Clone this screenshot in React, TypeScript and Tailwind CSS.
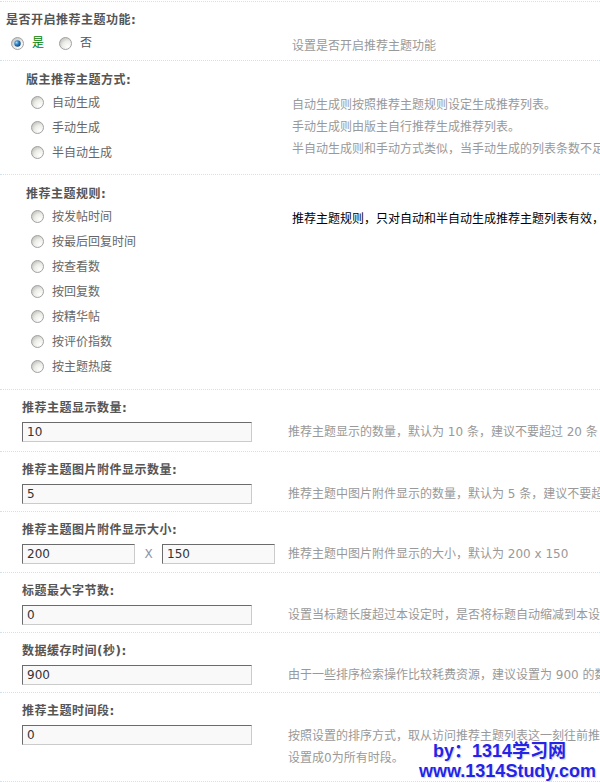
import React from 'react';

function Radio({ on = false }: { on?: boolean }) {
  return (
    <svg width="13" height="13" viewBox="0 0 13 13" className="shrink-0">
      <defs>
        <radialGradient id="rbg" cx="0.7" cy="0.75" r="0.75">
          <stop offset="0" stopColor="#ffffff" />
          <stop offset="0.6" stopColor="#ecece8" />
          <stop offset="1" stopColor="#c9c9c3" />
        </radialGradient>
        <radialGradient id="rdot" cx="0.35" cy="0.35" r="0.75">
          <stop offset="0" stopColor="#9fdcff" />
          <stop offset="0.45" stopColor="#2c80c4" />
          <stop offset="1" stopColor="#0a3a6e" />
        </radialGradient>
      </defs>
      <circle cx="6.5" cy="6.5" r="6" fill="url(#rbg)" stroke="#a2a2a2" strokeWidth="1" />
      {on && <circle cx="6.5" cy="6.5" r="3.2" fill="url(#rdot)" />}
    </svg>
  );
}

function Box({ value, w }: { value: string; w: string }) {
  return (
    <input
      readOnly
      value={value}
      className={`${w} h-[20px] border border-t-[#6b6b6b] border-l-[#6b6b6b] border-r-[#cbcbcb] border-b-[#cbcbcb] bg-[#f9f9f9] px-[4px] text-[12px] text-[#333] outline-none font-['DejaVu_Sans',sans-serif]`}
    />
  );
}

function Option({ text }: { text: string }) {
  return (
    <div className="flex h-[25px] items-center gap-[8px] pl-[31px] text-[#666]">
      <Radio />
      <span>{text}</span>
    </div>
  );
}

function Label({ text, indent }: { text: string; indent: string }) {
  return (
    <div className={`${indent} h-[20px] leading-[20px] font-bold tracking-[0.5px] text-[#555]`}>{text}</div>
  );
}

function Row({
  label,
  desc,
  children,
  pb = 'pb-[7px]',
}: {
  label: string;
  desc: React.ReactNode;
  children: React.ReactNode;
  pb?: string;
}) {
  return (
    <div className={`border-b border-dotted border-[#cde3f3] pt-[8px] ${pb}`}>
      <Label text={label} indent="pl-[22px]" />
      <div className="mt-[4px] flex items-center">
        <div className="flex w-[288px] shrink-0 items-center pl-[22px]">{children}</div>
        <div className="whitespace-nowrap leading-[20px] text-[#999]">{desc}</div>
      </div>
    </div>
  );
}

export default function App() {
  return (
    <div className="relative h-[782px] w-[600px] overflow-hidden bg-white pt-[1px] text-[12px] font-['DejaVu_Sans','Noto_Sans_CJK_SC',sans-serif]">
      <div className="border-t border-dotted border-[#cde3f3]">
        {/* 是否开启 */}
        <div className="border-b border-dotted border-[#cde3f3] pt-[8px] pb-[7px]">
          <Label text="是否开启推荐主题功能:" indent="pl-[6px]" />
          <div className="mt-[3px] flex h-[20px] items-start">
            <div className="flex h-[20px] w-[292px] shrink-0 items-center pl-[11px]">
              <Radio on />
              <span className="ml-[8px] text-[#008000]">是</span>
              <span className="ml-[15px]"><Radio /></span>
              <span className="ml-[8px] text-[#555]">否</span>
            </div>
            <div className="whitespace-nowrap pt-[3px] leading-[20px] text-[#999]">设置是否开启推荐主题功能</div>
          </div>
        </div>

        {/* 版主推荐主题方式 */}
        <div className="border-b border-dotted border-[#cde3f3] pt-[9px] pb-[9px]">
          <Label text="版主推荐主题方式:" indent="pl-[26px]" />
          <div className="flex items-start">
            <div className="w-[292px] shrink-0">
              <Option text="自动生成" />
              <Option text="手动生成" />
              <Option text="半自动生成" />
            </div>
            <div className="whitespace-nowrap pt-[4px] leading-[22px] text-[#999]">
              <div>自动生成则按照推荐主题规则设定生成推荐列表。</div>
              <div>手动生成则由版主自行推荐生成推荐列表。</div>
              <div>半自动生成则和手动方式类似，当手动生成的列表条数不足时，由系统自动补充。</div>
            </div>
          </div>
        </div>

        {/* 推荐主题规则 */}
        <div className="border-b border-dotted border-[#cde3f3] pt-[9px] pb-[10px]">
          <Label text="推荐主题规则:" indent="pl-[26px]" />
          <div className="flex items-start">
            <div className="w-[292px] shrink-0">
              <Option text="按发帖时间" />
              <Option text="按最后回复时间" />
              <Option text="按查看数" />
              <Option text="按回复数" />
              <Option text="按精华帖" />
              <Option text="按评价指数" />
              <Option text="按主题热度" />
            </div>
            <div className="whitespace-nowrap pt-[5px] leading-[20px] text-black">
              推荐主题规则，只对自动和半自动生成推荐主题列表有效，手动推荐无效
            </div>
          </div>
        </div>

        <Row label="推荐主题显示数量:" desc="推荐主题显示的数量，默认为 10 条，建议不要超过 20 条" pb="pb-[9px]">
          <Box value="10" w="w-[230px]" />
        </Row>

        <Row label="推荐主题图片附件显示数量:" desc="推荐主题中图片附件显示的数量，默认为 5 条，建议不要超过 10 条">
          <Box value="5" w="w-[230px]" />
        </Row>

        <Row label="推荐主题图片附件显示大小:" desc="推荐主题中图片附件显示的大小，默认为 200 x 150" pb="pb-[8px]">
          <Box value="200" w="w-[113px]" />
          <span className="w-[27px] text-center text-[#8a96a8]">X</span>
          <Box value="150" w="w-[113px]" />
        </Row>

        <Row label="标题最大字节数:" desc="设置当标题长度超过本设定时，是否将标题自动缩减到本设定中所指定的字节数">
          <Box value="0" w="w-[230px]" />
        </Row>

        <Row label="数据缓存时间(秒):" desc="由于一些排序检索操作比较耗费资源，建议设置为 900 的数值">
          <Box value="900" w="w-[230px]" />
        </Row>

        {/* 推荐主题时间段 */}
        <div className="border-b border-dotted border-[#cde3f3] pt-[8px] pb-[12px]">
          <Label text="推荐主题时间段:" indent="pl-[22px]" />
          <div className="mt-[4px] flex items-start">
            <div className="w-[288px] shrink-0 pl-[22px]">
              <Box value="0" w="w-[230px]" />
            </div>
            <div className="whitespace-nowrap leading-[22px] text-[#999]">
              <div>按照设置的排序方式，取从访问推荐主题列表这一刻往前推算的时间段内的主题，</div>
              <div>设置成0为所有时段。</div>
            </div>
          </div>
        </div>
      </div>

      {/* watermark */}
      <div className="absolute left-[419px] top-[741px] font-bold text-[18px] leading-[20px] text-[#2424e4] font-['Liberation_Sans','Noto_Sans_CJK_SC',sans-serif] [text-shadow:0_0_2px_#ffffff,1px_1px_1px_#c8c8ff]">
        <div className="pl-[14px]">by：1314学习网</div>
        <div>www.1314Study.com</div>
      </div>
    </div>
  );
}
